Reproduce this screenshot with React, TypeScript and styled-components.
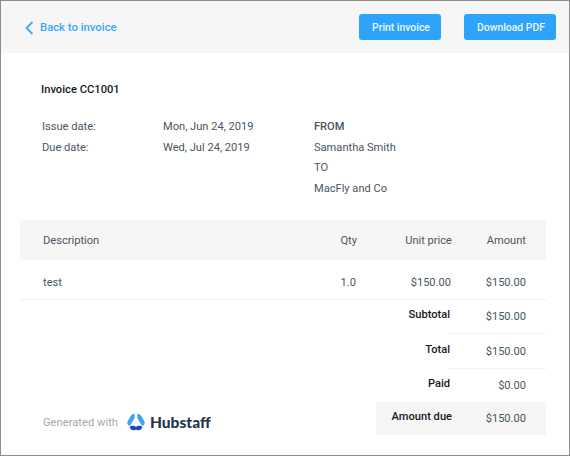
import React from "react";
import styled, { createGlobalStyle } from "styled-components";

const GlobalStyle = createGlobalStyle`
	html, body {
		margin: 0;
		padding: 0;
		background: #fff;
	}
	body {
		font-family: Roboto, "Liberation Sans", sans-serif;
		font-size: 11.1px;
		color: #4a5561;
	}
`;

const Frame = styled.div`
	width: 570px;
	height: 456px;
	box-sizing: border-box;
	border: 1px solid #8d8d8d;
	background: #fff;
	overflow: hidden;
`;

const TopBar = styled.header`
	height: 52px;
	background: #f6f6f7;
	display: flex;
	align-items: center;
	padding: 0 13px 0 24px;
`;

const BackLink = styled.a`
	display: flex;
	align-items: center;
	gap: 6px;
	color: #3da8f5;
	font-size: 11.3px;
	font-weight: 500;
	margin-right: auto;
	svg {
		margin-top: 2px;
	}
`;

const ActionButton = styled.button<{ $width: number }>`
	width: ${(props) => props.$width}px;
	height: 26px;
	margin-left: 23px;
	border: 0;
	border-radius: 3px;
	background: #2ea3fb;
	color: #eaf6ff;
	font-family: inherit;
	font-size: 10.4px;
	font-weight: 500;
	padding: 0 0 0 2px;
`;

const Body = styled.main`
	padding: 0 23px 0 19px;
`;

const InvoiceTitle = styled.h1`
	margin: 0;
	padding: 29px 0 0 21px;
	font-size: 11.2px;
	line-height: 16px;
	font-weight: 500;
	color: #16191d;
`;

const Meta = styled.section`
	display: grid;
	grid-template-columns: 121px 151px 1fr;
	grid-auto-rows: 20.7px;
	padding: 19px 0 0 22px;
	height: 122px;
	box-sizing: border-box;
	line-height: 20.7px;
`;

const MetaParty = styled.div<{ $strong?: boolean }>`
	grid-column: 3;
	font-weight: ${(props) => (props.$strong ? 500 : 400)};
`;

const TableRow = styled.div<{ $head?: boolean }>`
	display: grid;
	grid-template-columns: 1fr 60px 95px 74px;
	align-items: center;
	height: 40px;
	padding: ${(props) => (props.$head ? "0 20px 0 23px" : "5px 20px 0 23px")};
	background: ${(props) => (props.$head ? "#f6f6f7" : "transparent")};
	border-bottom: ${(props) => (props.$head ? "0" : "1px solid #eeeff1")};
	box-sizing: border-box;
`;

const Cell = styled.div<{ $right?: boolean }>`
	text-align: ${(props) => (props.$right ? "right" : "left")};
`;

const ValueCell = styled(Cell)`
	padding-right: 1px;
`;

const Bottom = styled.section`
	display: flex;
	justify-content: space-between;
	align-items: flex-end;
`;

const Generated = styled.div`
	display: flex;
	align-items: center;
	padding: 0 0 4px 23px;
	color: #a4a8ad;
	font-size: 11.2px;
`;

const Brand = styled.span`
	display: flex;
	align-items: center;
	gap: 5px;
	margin-left: 9px;
	color: #24364d;
	font-family: Lato, sans-serif;
	font-size: 15.5px;
	font-weight: 900;
`;

const Totals = styled.div`
	width: 170px;
`;

const TotalRow = styled.div<{ $height: number; $due?: boolean }>`
	display: grid;
	grid-template-columns: 76px 94px;
	height: ${(props) => props.$height}px;
	background: ${(props) => (props.$due ? "#f6f6f7" : "transparent")};
`;

const TotalLabel = styled.div<{ $due?: boolean }>`
	align-self: center;
	margin-top: -5px;
	padding-right: ${(props) => (props.$due ? 0 : 2)}px;
	color: #16191d;
	font-weight: 500;
	text-align: right;
`;

const TotalValue = styled.div<{ $line?: boolean }>`
	display: flex;
	align-items: center;
	justify-content: flex-end;
	margin-left: -4px;
	padding-right: 20px;
	border-bottom: ${(props) => (props.$line ? "1px solid #f0f1f2" : "0")};
`;

const HubstaffMark = () => (
	<svg width="18" height="18" viewBox="0 0 18 18">
		<path d="M7.6 0.6 C5.6 1 4.2 2 3.2 3.8 L0.6 8.4 C0 9.8 0.2 11.2 1.4 12.2 L3 13 L7.6 5 Z" fill="#3fa3f2" />
		<path d="M10.4 0.6 C12.4 1 13.8 2 14.8 3.8 L17.4 8.4 C18 9.8 17.8 11.2 16.6 12.2 L15 13 L10.4 5 Z" fill="#3fa3f2" />
		<path d="M2.6 14 C4.6 12.2 7.6 12.4 9 14 C10.4 12.4 13.4 12.2 15.4 14 C14.8 17 11 18.4 9 16.4 C7 18.4 3.2 17 2.6 14 Z" fill="#1b48bd" />
	</svg>
);

const App = () => {
	return (
		<>
			<GlobalStyle />
			<Frame>
				<TopBar>
					<BackLink>
						<svg width="9" height="14" viewBox="0 0 9 14" fill="none">
							<path d="M7.5 1 L1.5 7 L7.5 13" stroke="#3da8f5" strokeWidth="1.8" />
						</svg>
						Back to invoice
					</BackLink>
					<ActionButton $width={82}>Print invoice</ActionButton>
					<ActionButton $width={92}>Download PDF</ActionButton>
				</TopBar>
				<Body>
					<InvoiceTitle>Invoice CC1001</InvoiceTitle>
					<Meta>
						<div>Issue date:</div>
						<div>Mon, Jun 24, 2019</div>
						<MetaParty $strong>FROM</MetaParty>
						<div>Due date:</div>
						<div>Wed, Jul 24, 2019</div>
						<MetaParty>Samantha Smith</MetaParty>
						<MetaParty>TO</MetaParty>
						<MetaParty>MacFly and Co</MetaParty>
					</Meta>
					<TableRow $head>
						<Cell>Description</Cell>
						<Cell $right>Qty</Cell>
						<Cell $right>Unit price</Cell>
						<Cell $right>Amount</Cell>
					</TableRow>
					<TableRow>
						<Cell>test</Cell>
						<ValueCell $right>1.0</ValueCell>
						<ValueCell $right>$150.00</ValueCell>
						<Cell $right>$150.00</Cell>
					</TableRow>
					<Bottom>
						<Generated>
							Generated with
							<Brand>
								<HubstaffMark />
								Hubstaff
							</Brand>
						</Generated>
						<Totals>
							<TotalRow $height={34}>
								<TotalLabel>Subtotal</TotalLabel>
								<TotalValue $line>$150.00</TotalValue>
							</TotalRow>
							<TotalRow $height={35}>
								<TotalLabel>Total</TotalLabel>
								<TotalValue $line>$150.00</TotalValue>
							</TotalRow>
							<TotalRow $height={33}>
								<TotalLabel>Paid</TotalLabel>
								<TotalValue>$0.00</TotalValue>
							</TotalRow>
							<TotalRow $height={33} $due>
								<TotalLabel $due>Amount due</TotalLabel>
								<TotalValue>$150.00</TotalValue>
							</TotalRow>
						</Totals>
					</Bottom>
				</Body>
			</Frame>
		</>
	);
};

export default App;
